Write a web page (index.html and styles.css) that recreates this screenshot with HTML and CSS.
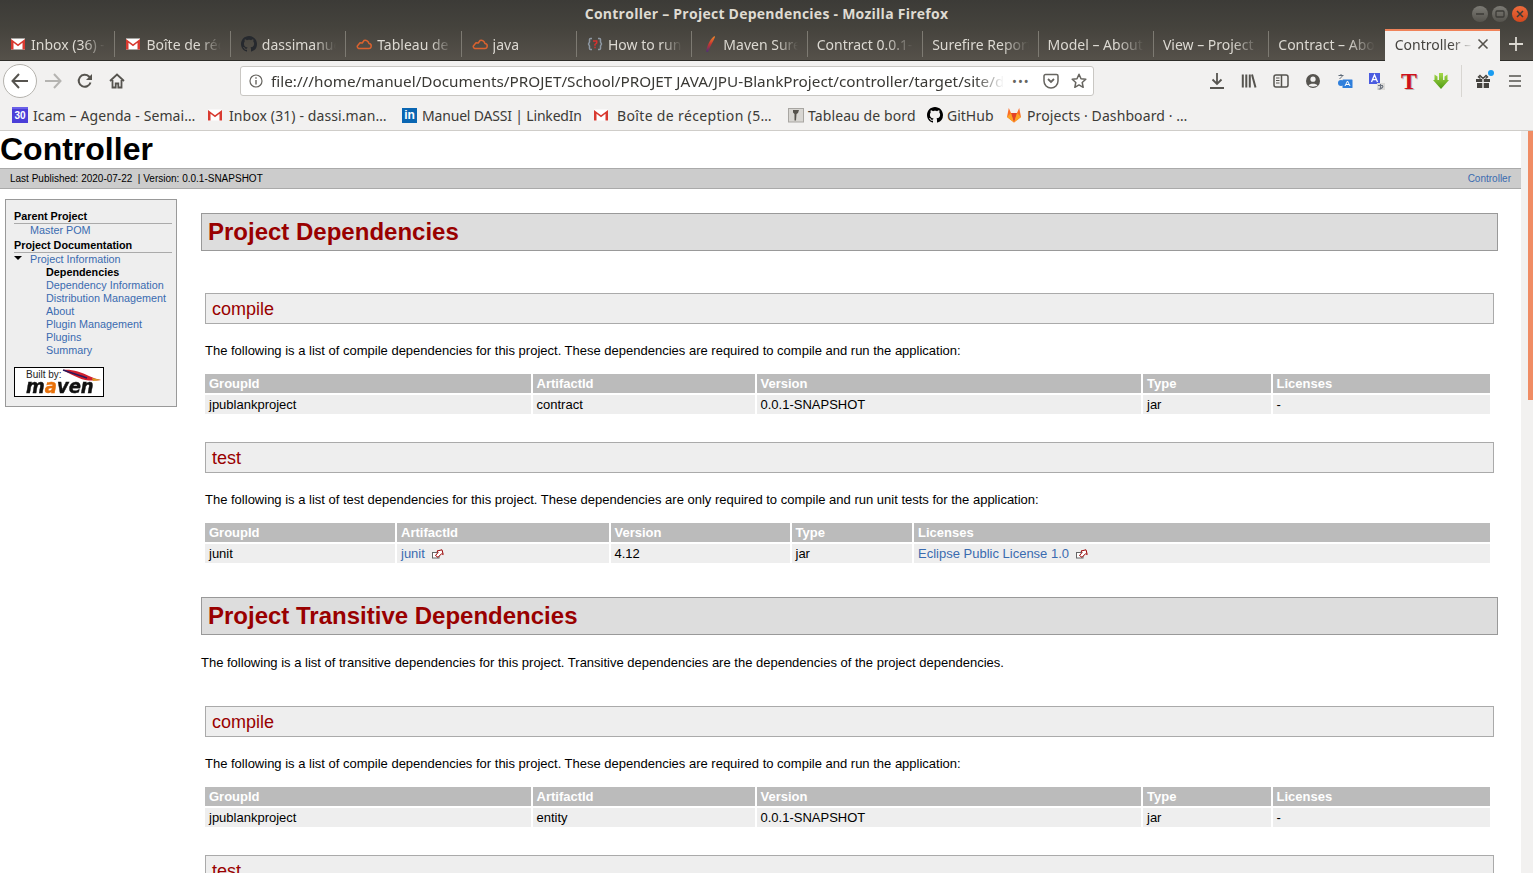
FILE: index.html
```html
<!DOCTYPE html>
<html lang="en">
<head>
<meta charset="utf-8">
<title>Controller – Project Dependencies</title>
<link rel="stylesheet" href="styles.css">
</head>
<body>
<svg class="defs" width="0" height="0" aria-hidden="true">
  <defs>
    <linearGradient id="feathergrad" x1="0" y1="0" x2="0" y2="1"><stop offset="0" stop-color="#f08a2c"/><stop offset=".5" stop-color="#c8352f"/><stop offset="1" stop-color="#4a2f78"/></linearGradient>
    <linearGradient id="greengrad" gradientUnits="userSpaceOnUse" x1="0" y1="0" x2="0" y2="16"><stop offset="0" stop-color="#a5d84a"/><stop offset="1" stop-color="#4f9a12"/></linearGradient>
  </defs>
  <symbol id="gmail" viewBox="0 0 16 16"><rect x="1" y="2.500" width="14" height="11" fill="#fff"/><path d="M1 13.500V3l7 5.200L15 3v10.500h-2.500V6.800L8 10.200 3.500 6.800v6.700z" fill="#d93a30"/></symbol>
  <symbol id="github" viewBox="0 0 16 16"><path d="M8 0C3.580 0 0 3.580 0 8c0 3.540 2.290 6.530 5.470 7.590.4.070.55-.17.55-.38 0-.19-.01-.82-.01-1.490-2.010.37-2.530-.49-2.690-.94-.09-.23-.48-.94-.82-1.130-.28-.15-.68-.52-.01-.53.63-.01 1.080.58 1.230.82.72 1.210 1.870.87 2.330.66.07-.52.28-.87.51-1.070-1.780-.2-3.640-.89-3.640-3.950 0-.87.31-1.590.82-2.150-.08-.2-.36-1.020.08-2.120 0 0 .67-.21 2.200.82.64-.18 1.320-.27 2-.27.68 0 1.360.09 2 .27 1.530-1.040 2.200-.82 2.200-.82.44 1.100.16 1.920.08 2.120.51.56.82 1.270.82 2.150 0 3.070-1.870 3.750-3.650 3.950.29.25.54.73.54 1.480 0 1.070-.01 1.930-.01 2.200 0 .21.15.46.55.38A8.013 8.013 0 0 0 16 8c0-4.420-3.580-8-8-8z"/></symbol>
  <symbol id="cloud" viewBox="0 0 16 16"><path d="M4 12.500h8.500a2.500 2.500 0 0 0 .4-5A3.800 3.800 0 0 0 8 4.500L6.300 7 4 6.800 1.200 10.300A2.300 2.300 0 0 0 4 12.500z" fill="none" stroke="#d9622f" stroke-width="1.500" stroke-linejoin="round"/></symbol>
  <symbol id="ext" viewBox="0 0 12 10"><rect x=".5" y="3.500" width="6.500" height="5.500" fill="#fff" stroke="#666"/><path d="M3.500 6.500 6 3.500 5 2 10 .8l1.200 4.700-1.600-.8L6 8.300z" fill="#fff" stroke="#900" stroke-linejoin="round"/></symbol>
</svg>

<header class="browser">
  <div class="titlebar">
    <span class="wintitle">Controller – Project Dependencies - Mozilla Firefox</span>
    <div class="winbtns">
      <span class="winbtn"><svg width="10" height="10" viewBox="0 0 10 10"><path d="M1 5h8" stroke="#3c3b37" stroke-width="1.500"/></svg></span>
      <span class="winbtn"><svg width="10" height="10" viewBox="0 0 10 10"><rect x="1" y="2" width="8" height="6" rx="1" fill="none" stroke="#3c3b37" stroke-width="1.300"/></svg></span>
      <span class="winbtn close"><svg width="10" height="10" viewBox="0 0 10 10"><path d="M2 2l6 6M8 2l-6 6" stroke="#3c3b37" stroke-width="1.500"/></svg></span>
    </div>
  </div>
  <div class="tabs">
    <div class="tab"><svg class="ico16" width="16" height="16"><use href="#gmail"/></svg><span class="tlabel">Inbox (36) - manuel</span></div>
    <div class="tab"><svg class="ico16" width="16" height="16"><use href="#gmail"/></svg><span class="tlabel">Boîte de réception</span></div>
    <div class="tab"><svg class="ico16 dark" width="16" height="16"><use href="#github"/></svg><span class="tlabel">dassimanuel/JPU</span></div>
    <div class="tab"><svg class="ico16" width="16" height="16"><use href="#cloud"/></svg><span class="tlabel">Tableau de bord</span></div>
    <div class="tab"><svg class="ico16" width="16" height="16"><use href="#cloud"/></svg><span class="tlabel">java</span></div>
    <div class="tab"><svg class="ico16" width="16" height="16" viewBox="0 0 16 16"><path d="M5 2.500H3.500a1 1 0 0 0-1 1v2.500L1.500 8l1 2V12.500a1 1 0 0 0 1 1H5M11 2.500h1.500a1 1 0 0 1 1 1v2.500l1 2-1 2V12.500a1 1 0 0 1-1 1H11" fill="none" stroke="#8e98a3" stroke-width="1.500"/><path d="M6 5h3.700v2L8 8.500v1.200M8 10.800v1.400" fill="none" stroke="#d8302f" stroke-width="1.500"/></svg><span class="tlabel">How to run a</span></div>
    <div class="tab"><svg class="ico16" width="16" height="16" viewBox="0 0 16 16"><path d="M12.500 0C9 2.500 6 7 4 15.500L6 16C8 10.500 11 6 13 1z" fill="url(#feathergrad)"/></svg><span class="tlabel">Maven Surefire</span></div>
    <div class="tab nofav"><span class="tlabel">Contract 0.0.1-SNAP</span></div>
    <div class="tab nofav"><span class="tlabel">Surefire Report</span></div>
    <div class="tab nofav"><span class="tlabel">Model – About</span></div>
    <div class="tab nofav"><span class="tlabel">View – Project Info</span></div>
    <div class="tab nofav"><span class="tlabel">Contract – About</span></div>
    <div class="tab active"><span class="tlabel">Controller – Proj</span><svg class="tclose" width="12" height="12" viewBox="0 0 12 12"><path d="M1.500 1.500l9 9M10.500 1.500l-9 9" stroke="#55524c" stroke-width="1.600"/></svg></div>
    <div class="newtab"><svg width="14" height="14" viewBox="0 0 14 14"><path d="M7 0v14M0 7h14" stroke="#dcd9d2" stroke-width="1.800"/></svg></div>
  </div>
  <div class="navbar">
    <span class="backbtn"><svg width="18" height="16" viewBox="0 0 18 16"><path d="M8 1 1.500 8 8 15M2 8h15" fill="none" stroke="#56544f" stroke-width="2"/></svg></span>
    <span class="navbtn"><svg width="18" height="16" viewBox="0 0 18 16"><path d="M10 1l6.500 7-6.500 7M16 8H1" fill="none" stroke="#b5b4b1" stroke-width="2"/></svg></span>
    <span class="navbtn"><svg width="16" height="16" viewBox="0 0 16 16"><path d="M13.500 9.500A6 6 0 1 1 12 3.500L14 5.500" fill="none" stroke="#56544f" stroke-width="2"/><path d="M15 1v6H9z" fill="#56544f"/></svg></span>
    <span class="navbtn"><svg width="16" height="16" viewBox="0 0 16 16"><path d="M1 8l7-6.500L15 8M3.500 7v7.500h3.200v-4h2.600v4h3.200V7" fill="none" stroke="#56544f" stroke-width="1.800"/></svg></span>
    <div class="urlbar">
      <svg class="info" width="14" height="14" viewBox="0 0 14 14"><circle cx="7" cy="7" r="6" fill="none" stroke="#66645f" stroke-width="1.200"/><path d="M7 6v4.500M7 3.200v1.500" stroke="#66645f" stroke-width="1.400"/></svg>
      <span class="url">file:///home/manuel/Documents/PROJET/School/PROJET JAVA/JPU-BlankProject/controller/target/site/dependencies.html</span>
      <span class="dots">•••</span>
      <svg class="urlicon" width="16" height="16" viewBox="0 0 16 16"><path d="M2.500 1.500h11A1.500 1.500 0 0 1 15 3v5a7 7 0 0 1-14 0V3a1.500 1.500 0 0 1 1.500-1.500z" fill="none" stroke="#66645f" stroke-width="1.500"/><path d="M5 6l3 3 3-3" fill="none" stroke="#66645f" stroke-width="1.800"/></svg>
      <svg class="urlicon" width="16" height="16" viewBox="0 0 16 16"><path d="M8 1.300l2 4.500 4.800.5-3.600 3.200 1 4.800L8 11.900l-4.200 2.400 1-4.800L1.200 6.300 6 5.800z" fill="none" stroke="#66645f" stroke-width="1.500" stroke-linejoin="round"/></svg>
    </div>
    <div class="tools">
      <span class="tool"><svg width="16" height="16" viewBox="0 0 16 16"><path d="M8 0v11M3.500 6.500 8 11l4.500-4.500M1 15h14" fill="none" stroke="#56544f" stroke-width="1.800"/></svg></span>
      <span class="tool"><svg width="16" height="16" viewBox="0 0 16 16"><path d="M1.800 1.500v13M5.300 1.500v13M8.800 1.500v13M11 1.500l3.500 13" fill="none" stroke="#56544f" stroke-width="2"/></svg></span>
      <span class="tool"><svg width="16" height="16" viewBox="0 0 16 16"><rect x="1" y="2" width="14" height="12" rx="2" fill="none" stroke="#56544f" stroke-width="1.500"/><path d="M8.500 2v12" stroke="#56544f" stroke-width="1.500"/><path d="M3 5h3.500M3 7.500h3.500M3 10h3.500" stroke="#56544f"/></svg></span>
      <span class="tool"><svg width="16" height="16" viewBox="0 0 16 16"><circle cx="8" cy="8" r="7" fill="#56544f"/><circle cx="8" cy="6.200" r="2.600" fill="#f2f1f0"/><path d="M3.500 12.500c1-2.500 8-2.500 9 0-2 1.500-7 1.500-9 0z" fill="#f2f1f0"/></svg></span>
      <span class="tool"><svg width="16" height="16" viewBox="0 0 16 16"><circle cx="4" cy="10" r="3" fill="#2f7fdb"/><rect x="5.500" y="6.500" width="10" height="8.500" rx=".5" fill="#2f7fdb"/><path d="M8 13l2.500-5 2.500 5M9 11.500h3" fill="none" stroke="#fff"/><path d="M1.500 2.500h5M4 1v1.500M2.500 5.500c1.500-.5 2.500-1.500 2.800-3" fill="none" stroke="#5f6b78"/></svg></span>
      <span class="tool"><svg width="16" height="17" viewBox="0 0 16 17"><rect x="0" y="0" width="11" height="11" fill="#4a5be0"/><path d="M2.500 9 5.500 2l3 7M3.600 6.600h3.800" fill="none" stroke="#fff" stroke-width="1.300"/><rect x="8" y="10" width="8" height="7" fill="#dcdbd8"/><path d="M9 12.500h5M11.500 11v5M9.500 16c2 0 4-1 4.500-3" fill="none" stroke="#6d7480" stroke-width="1.100"/></svg></span>
      <span class="tool ttool">T</span>
      <span class="tool"><svg width="16" height="16" viewBox="0 0 16 16"><path d="M6 0h4v7H6zM1.500 1.500l3 2V7h-3zM14.500 1.500l-3 2V7h3zM0 7h16l-8 9z" fill="url(#greengrad)"/></svg></span>
      <span class="toolsep"></span>
      <span class="tool gift"><svg width="16" height="16" viewBox="0 0 16 16"><path d="M1 6h6.300v3H1zM8.700 6H15v3H8.700zM2 10h5.300v5H2zM8.700 10H14v5H8.700z" fill="#45433f"/><path d="M8 5.500 5 2.500 3.500 4l2 1.500M8 5.500 11 2.500 12.500 4l-2 1.500" fill="none" stroke="#45433f" stroke-width="1.400"/></svg><i class="dot"></i></span>
      <span class="tool"><svg width="14" height="14" viewBox="0 0 14 14"><path d="M1 2h12M1 7h12M1 12h12" stroke="#56544f" stroke-width="1.700"/></svg></span>
    </div>
  </div>
  <div class="bookmarks">
    <span class="bm"><span class="cal">30</span>Icam – Agenda - Semai…</span>
    <span class="bm"><svg width="16" height="16"><use href="#gmail"/></svg>Inbox (31) - dassi.man…</span>
    <span class="bm"><span class="li">in</span>Manuel DASSI | LinkedIn</span>
    <span class="bm"><svg width="16" height="16"><use href="#gmail"/></svg>Boîte de réception (5…</span>
    <span class="bm"><svg width="16" height="16" viewBox="0 0 16 16"><rect x=".5" y="1.500" width="15" height="13.500" fill="#d8d6d2" stroke="#a8a6a2"/><path d="M5 3h6l-1 3-1.500 1-.5 6.500H6.500L6.500 7 5 5.500z" fill="#55524c"/></svg>Tableau de bord</span>
    <span class="bm"><svg width="16" height="16"><use href="#github"/></svg>GitHub</span>
    <span class="bm"><svg width="16" height="16" viewBox="0 0 16 16"><path d="M8 15.500 1 10 2.800 1 5 6h6l2.200-5L15 10z" fill="#fc6d26"/><path d="M8 15.500 5 6h6z" fill="#e24329"/><path d="M8 15.500 1 10l4-4zM8 15.500l7-5.500-4-4z" fill="#fca326"/></svg>Projects · Dashboard · …</span>
  </div>
</header>

<div class="viewport">
  <div class="page">
    <div class="banner"><h1 class="project">Controller</h1></div>
    <div class="breadcrumbs">
      <span>Last Published: 2020-07-22&nbsp; | Version: 0.0.1-SNAPSHOT</span>
      <a href="#">Controller</a>
    </div>
    <div class="columns">
      <nav class="sidebar">
        <h5>Parent Project</h5>
        <ul class="lvl1"><li><a href="#">Master POM</a></li></ul>
        <h5>Project Documentation</h5>
        <ul class="lvl1">
          <li class="open"><a href="#">Project Information</a>
            <ul class="lvl2">
              <li><strong>Dependencies</strong></li>
              <li><a href="#">Dependency Information</a></li>
              <li><a href="#">Distribution Management</a></li>
              <li><a href="#">About</a></li>
              <li><a href="#">Plugin Management</a></li>
              <li><a href="#">Plugins</a></li>
              <li><a href="#">Summary</a></li>
            </ul>
          </li>
        </ul>
        <div class="poweredby">
          <span class="builtby">Built by:</span>
          <svg class="feather" width="40" height="14" viewBox="0 0 40 14"><path d="M1 1c8-1 18 2 26 6 4 2 8 3 12 4-8 1-16 1-22-2C11 6 5 4 1 1z" fill="#d0202e"/><path d="M1 1c8 3 16 5 24 8" fill="none" stroke="#2a1a5e" stroke-width="1.400"/><path d="M30 9l9 2-8 1z" fill="#d9a020"/></svg>
          <span class="mvn">m<b>a</b>ven</span>
        </div>
      </nav>
      <main class="content">
        <h2 class="h2 first-h2">Project Dependencies</h2>
        <section class="sub">
          <h3 class="h3">compile</h3>
          <p class="para">The following is a list of compile dependencies for this project. These dependencies are required to compile and run the application:</p>
          <table class="deps">
            <colgroup><col class="a1"><col class="a2"><col class="a3"><col class="a4"><col class="a5"></colgroup>
            <tr><th>GroupId</th><th>ArtifactId</th><th>Version</th><th>Type</th><th>Licenses</th></tr>
            <tr><td>jpublankproject</td><td>contract</td><td>0.0.1-SNAPSHOT</td><td>jar</td><td>-</td></tr>
          </table>
        </section>
        <section class="sub">
          <h3 class="h3">test</h3>
          <p class="para">The following is a list of test dependencies for this project. These dependencies are only required to compile and run unit tests for the application:</p>
          <table class="deps">
            <colgroup><col class="b1"><col class="b2"><col class="b3"><col class="b4"><col class="b5"></colgroup>
            <tr><th>GroupId</th><th>ArtifactId</th><th>Version</th><th>Type</th><th>Licenses</th></tr>
            <tr><td>junit</td><td><a href="#">junit</a><svg class="ext" width="12" height="10"><use href="#ext"/></svg></td><td>4.12</td><td>jar</td><td><a href="#">Eclipse Public License 1.0</a><svg class="ext" width="12" height="10"><use href="#ext"/></svg></td></tr>
          </table>
        </section>
        <h2 class="h2 second-h2">Project Transitive Dependencies</h2>
        <p class="para lead">The following is a list of transitive dependencies for this project. Transitive dependencies are the dependencies of the project dependencies.</p>
        <section class="sub first-sub">
          <h3 class="h3">compile</h3>
          <p class="para">The following is a list of compile dependencies for this project. These dependencies are required to compile and run the application:</p>
          <table class="deps">
            <colgroup><col class="a1"><col class="a2"><col class="a3"><col class="a4"><col class="a5"></colgroup>
            <tr><th>GroupId</th><th>ArtifactId</th><th>Version</th><th>Type</th><th>Licenses</th></tr>
            <tr><td>jpublankproject</td><td>entity</td><td>0.0.1-SNAPSHOT</td><td>jar</td><td>-</td></tr>
          </table>
        </section>
        <section class="sub">
          <h3 class="h3">test</h3>
        </section>
      </main>
    </div>
  </div>
  <div class="scrollbar"><div class="thumb"></div></div>
</div>
</body>
</html>
```
FILE: styles.css
```css
* { box-sizing: border-box; }
html, body { margin: 0; height: 100%; overflow: hidden; }
body { font-family: "Liberation Sans", Arial, sans-serif; background: #fff; color: #000; display: flex; flex-direction: column; width: 1533px; height: 873px; }
.defs { position: absolute; }

.browser { flex: none; font-family: "Noto Sans", "Open Sans", sans-serif; }
.titlebar { height: 28px; background: linear-gradient(#3c3b37, #45433d); display: flex; align-items: center; justify-content: center; position: relative; }
.wintitle { color: #dfdbd2; font: 700 14px/26px "Open Sans", sans-serif; letter-spacing: .25px; }
.winbtns { position: absolute; right: 5px; top: 6px; display: flex; gap: 4px; }
.winbtn { width: 16px; height: 16px; border-radius: 50%; background: linear-gradient(#7c7b75, #55534d); display: flex; align-items: center; justify-content: center; }
.winbtn.close { background: linear-gradient(#ee6b3c, #d2481e); }

.tabs { height: 33px; display: flex; background: linear-gradient(#45433d, #55514a); border-bottom: 1px solid #2e2d29; }
.tab { width: 115.4px; flex: none; height: 32px; display: flex; align-items: center; gap: 5px; padding: 0 10px; position: relative; color: #dcd9d2; font-size: 14px; white-space: nowrap; overflow: hidden; }
.tab::after { content: ""; position: absolute; right: 0; top: 3px; bottom: 3px; width: 1px; background: #7d7a72; }
.tab.nofav { padding-left: 9px; }
.ico16 { flex: none; }
.ico16.dark { fill: #26292e; }
.tlabel { flex: 1; min-width: 0; overflow: hidden; -webkit-mask-image: linear-gradient(to right, #000 72%, transparent 100%); mask-image: linear-gradient(to right, #000 72%, transparent 100%); }
.tab.active { height: 32px; margin-top: 1px; background: #f2f1f0; color: #45433f; border-top: 2px solid #f0835a; padding: 0 11px 4px 10px; gap: 4px; }
.tab.active::after { display: none; }
.tclose { flex: none; }
.newtab { width: 32px; height: 32px; display: flex; align-items: center; justify-content: center; }
.tabs .tab:nth-child(12)::after { display: none; }

.navbar { height: 40px; background: #f2f1f0; display: flex; align-items: center; padding-left: 3px; }
.backbtn { width: 34px; height: 34px; border-radius: 50%; background: #fff; border: 1px solid #b5b3ae; display: flex; align-items: center; justify-content: center; flex: none; }
.navbtn { width: 32px; height: 32px; flex: none; display: flex; align-items: center; justify-content: center; }
.urlbar { width: 854px; height: 30px; margin-left: 107px; background: #fff; border: 1px solid #c9c7c3; border-radius: 3px; display: flex; align-items: center; padding: 0 6px 0 8px; flex: none; }
.info { flex: none; }
.url { flex: 1; min-width: 0; margin-left: 8px; font-size: 15.3px; color: #3a3935; white-space: nowrap; overflow: hidden; -webkit-mask-image: linear-gradient(to right, #000 96%, transparent 100%); mask-image: linear-gradient(to right, #000 96%, transparent 100%); }
.dots { flex: none; width: 19px; margin-left: 8px; font-size: 13px; line-height: 14px; color: #66645f; letter-spacing: 1px; white-space: nowrap; overflow: hidden; }
.urlicon { flex: none; margin-left: 12px; }
.tools { display: flex; align-items: center; margin-left: 107px; }
.tool { width: 32px; height: 32px; flex: none; display: flex; align-items: center; justify-content: center; position: relative; }
.ttool { font: 700 24px/32px "Liberation Serif", serif; color: #cf1119; text-shadow: 1px 1px 0 #b9b7b3; }
.toolsep { width: 1px; height: 32px; background: #d8d6d2; margin: 0 5px 0 4px; flex: none; }
.gift .dot { position: absolute; right: 5px; top: 5px; width: 6px; height: 6px; border-radius: 50%; background: #1a9cf0; }

.bookmarks { height: 30px; background: #f2f1f0; border-bottom: 1px solid #cfcdc9; display: grid; grid-template-columns: 195px 195px 191px 195px 139px 79px auto; align-items: center; padding: 0 0 1px 12px; color: #3c3b37; font-size: 14px; white-space: nowrap; }
.bm { display: flex; align-items: center; gap: 6px; letter-spacing: .1px; }
.bm:nth-child(1) { gap: 5px; }
.bm:nth-child(3) { gap: 5px; letter-spacing: -.18px; }
.bm:nth-child(4) { gap: 8px; letter-spacing: .35px; }
.bm:nth-child(5) { gap: 4px; }
.bm:nth-child(6) { gap: 4px; letter-spacing: 0; }
.bm:nth-child(7) { gap: 5px; }
.bm svg { flex: none; }
.cal { width: 16px; height: 16px; background: #4b3fd8; color: #fff; font: 700 10px/14px "Liberation Sans", sans-serif; text-align: center; border-top: 2px solid #6a60e8; flex: none; letter-spacing: 0; }
.li { width: 15px; height: 15px; background: #0a66b2; color: #fff; font: 700 12px/15px "Liberation Sans", sans-serif; text-align: center; flex: none; letter-spacing: 0; }

.viewport { flex: 1; min-height: 0; display: flex; overflow: hidden; }
.page { width: 1521px; flex: none; overflow: hidden; font-size: 13px; }
.scrollbar { width: 12px; flex: none; background: #f2f1f0; padding-left: 7px; }
.thumb { height: 269px; width: 5px; background: #f08c64; }

.banner { height: 37px; }
.project { margin: 0; font-size: 32px; line-height: 37px; font-weight: 700; }
.breadcrumbs { height: 21px; background: #ccc; border-top: 1px solid #aaa; border-bottom: 1px solid #aaa; display: flex; justify-content: space-between; align-items: center; padding: 0 10px; font-size: 10px; }
a { color: #3a6bb0; text-decoration: none; }

.columns { display: flex; align-items: flex-start; }
.sidebar { width: 172px; height: 208px; margin: 10px 0 0 5px; flex: none; background: #eee; border: 1px solid #999; padding: 10px 4px 0 8px; font-size: 10.8px; line-height: 13px; }
.sidebar h5 { margin: 0; font-size: 10.8px; line-height: 13px; font-weight: 700; border-bottom: 1px solid #aaa; height: 14px; }
.sidebar h5 + ul + h5 { margin-top: 2px; }
.sidebar ul { list-style: none; margin: 0; padding: 0; }
.lvl1 { padding-left: 16px !important; }
.lvl2 { padding-left: 16px !important; }
.open { position: relative; }
.open::before { content: ""; position: absolute; left: -16px; top: 3px; border: 4px solid transparent; border-top: 4px solid #000; border-bottom: 0; }
.poweredby { width: 90px; height: 30px; margin-top: 10px; background: #fff; border: 1px solid #000; position: relative; }
.builtby { position: absolute; left: 11px; top: 1px; font-size: 10px; line-height: 12px; color: #222; }
.feather { position: absolute; left: 47px; top: 1px; }
.mvn { position: absolute; left: 11px; top: 10px; font: italic 700 18px/18px "DejaVu Sans", sans-serif; letter-spacing: 0; color: #111; -webkit-text-stroke: .4px #111; transform: scaleY(1.1); transform-origin: left bottom; }
.mvn b { color: #e8710a; font-weight: 700; -webkit-text-stroke: .4px #e8710a; }

.content { width: 1297px; margin: 24px 0 0 24px; flex: none; }
.h2 { margin: 0; height: 38px; background: #ddd; border: 1px solid #999; color: #900; font-size: 24px; line-height: 35px; font-weight: 700; padding-left: 6px; }
.second-h2 { margin-top: 34px; }
.h3 { margin: 0; height: 31px; background: #eee; border: 1px solid #aaa; color: #900; font-size: 18px; line-height: 31px; font-weight: 400; padding-left: 6px; }
.sub { margin: 28px 4px 0; }
.first-h2 + .sub { margin-top: 42px; }
.first-sub { margin-top: 36px; }
.para { margin: 19px 0 14px; line-height: 15px; }
.lead { margin: 20px 0 0; }
.deps { width: 100%; margin: 0 0 -2px -2px; table-layout: fixed; border-collapse: separate; border-spacing: 2px; }
.deps th { background: #bbb; color: #fff; text-align: left; padding: 2px 4px; line-height: 15px; height: 19px; font-weight: 700; }
.deps td { background: #eee; padding: 2px 4px; line-height: 15px; height: 19px; }
.a1 { width: 325.5px; } .a2 { width: 222px; } .a3 { width: 384.5px; } .a4 { width: 127.5px; } .a5 { width: 217.5px; }
.b1 { width: 190px; } .b2 { width: 211.5px; } .b3 { width: 179px; } .b4 { width: 120.5px; } .b5 { width: 576px; }
.ext { margin-left: 7px; vertical-align: -1px; }
```
